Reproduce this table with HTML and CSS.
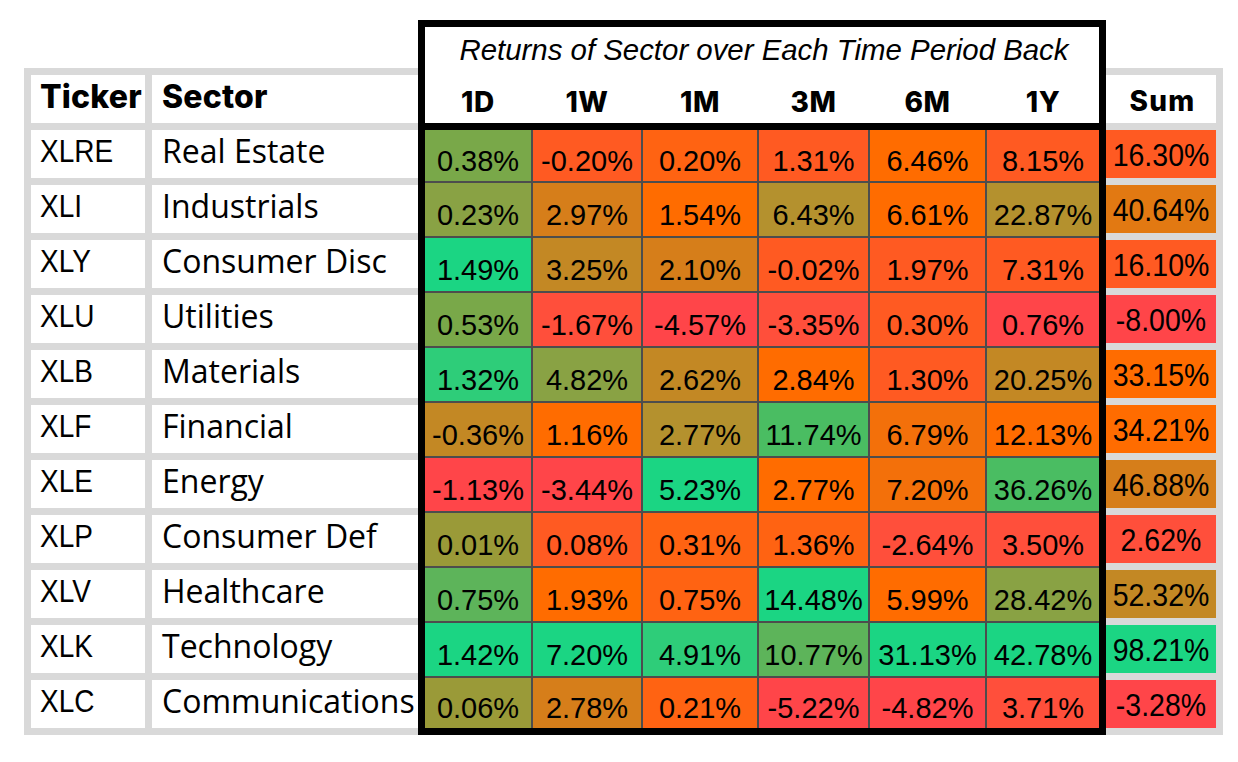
FILE: index.html
```html
<!DOCTYPE html>
<html>
<head>
<meta charset="utf-8">
<link rel="stylesheet" href="styles.css">
</head>
<body>
<div class="wrap">
  <div class="side">
    <div class="hcell">Ticker</div><div class="hcell">Sector</div>
    <div class="tk"><span>XLRE</span></div><div class="sec">Real Estate</div>
    <div class="tk"><span>XLI</span></div><div class="sec">Industrials</div>
    <div class="tk"><span>XLY</span></div><div class="sec">Consumer Disc</div>
    <div class="tk"><span>XLU</span></div><div class="sec">Utilities</div>
    <div class="tk"><span>XLB</span></div><div class="sec">Materials</div>
    <div class="tk"><span>XLF</span></div><div class="sec">Financial</div>
    <div class="tk"><span>XLE</span></div><div class="sec">Energy</div>
    <div class="tk"><span>XLP</span></div><div class="sec">Consumer Def</div>
    <div class="tk"><span>XLV</span></div><div class="sec">Healthcare</div>
    <div class="tk"><span>XLK</span></div><div class="sec">Technology</div>
    <div class="tk"><span>XLC</span></div><div class="sec">Communications</div>
  </div>

  <div class="box">
    <div class="head">
      <div class="title">Returns of Sector over Each Time Period Back</div>
      <div class="cols">
        <div>1D</div><div>1W</div><div>1M</div><div>3M</div><div>6M</div><div>1Y</div>
      </div>
    </div>
    <div class="grid">
      <div class="v3">0.38%</div><div class="r3">-0.20%</div><div class="o1">0.20%</div><div class="r3">1.31%</div><div class="o2">6.46%</div><div class="r3">8.15%</div>
      <div class="v2">0.23%</div><div class="b1">2.97%</div><div class="o2">1.54%</div><div class="b3">6.43%</div><div class="o2">6.61%</div><div class="b3">22.87%</div>
      <div class="g4">1.49%</div><div class="b2">3.25%</div><div class="b1">2.10%</div><div class="r3">-0.02%</div><div class="r3">1.97%</div><div class="r3">7.31%</div>
      <div class="v3">0.53%</div><div class="r2">-1.67%</div><div class="r1">-4.57%</div><div class="r2">-3.35%</div><div class="r3">0.30%</div><div class="r1">0.76%</div>
      <div class="g3">1.32%</div><div class="v2">4.82%</div><div class="b2">2.62%</div><div class="o2">2.84%</div><div class="r3">1.30%</div><div class="b2">20.25%</div>
      <div class="b2">-0.36%</div><div class="o2">1.16%</div><div class="b3">2.77%</div><div class="g2">11.74%</div><div class="o3">6.79%</div><div class="o2">12.13%</div>
      <div class="r1">-1.13%</div><div class="r1">-3.44%</div><div class="g4">5.23%</div><div class="o2">2.77%</div><div class="o3">7.20%</div><div class="g2">36.26%</div>
      <div class="v1">0.01%</div><div class="r3">0.08%</div><div class="o1">0.31%</div><div class="o1">1.36%</div><div class="r2">-2.64%</div><div class="r2">3.50%</div>
      <div class="g1">0.75%</div><div class="o2">1.93%</div><div class="o1">0.75%</div><div class="g4">14.48%</div><div class="o2">5.99%</div><div class="v2">28.42%</div>
      <div class="g4">1.42%</div><div class="g4">7.20%</div><div class="g3">4.91%</div><div class="g1">10.77%</div><div class="g4">31.13%</div><div class="g4">42.78%</div>
      <div class="v1">0.06%</div><div class="b1">2.78%</div><div class="o1">0.21%</div><div class="r1">-5.22%</div><div class="r1">-4.82%</div><div class="r2">3.71%</div>
    </div>
  </div>

  <div class="sum">
    <div class="shead">Sum</div>
    <div class="sv r3"><span>16.30%</span></div>
    <div class="sv b0"><span>40.64%</span></div>
    <div class="sv r3"><span>16.10%</span></div>
    <div class="sv r1"><span>-8.00%</span></div>
    <div class="sv o2"><span>33.15%</span></div>
    <div class="sv o2"><span>34.21%</span></div>
    <div class="sv b1"><span>46.88%</span></div>
    <div class="sv r2"><span>2.62%</span></div>
    <div class="sv b2"><span>52.32%</span></div>
    <div class="sv g4"><span>98.21%</span></div>
    <div class="sv r1"><span>-3.28%</span></div>
  </div>
</div>
</body>
</html>
```

FILE: styles.css
```css
html, body {
  margin: 0;
  background: #ffffff;
}

.wrap {
  display: flex;
  align-items: flex-end;
  padding: 20px 0 0 24px;
}

/* left ticker / sector table */
.side {
  display: grid;
  grid-template-columns: 114px 266px;
  grid-auto-rows: 48px;
  gap: 7px;
  padding: 7px 0 7px 7px;
  background: #d9d9d9;
}

.side > div {
  background: #ffffff;
  color: #000;
  overflow: visible;
  white-space: nowrap;
}

.hcell {
  font-family: "Inter", "Liberation Sans", sans-serif;
  font-weight: 800;
  font-size: 32px;
  letter-spacing: 0.2px;
  line-height: 41px;
  padding: 1px 0 0 9px;
}

.hcell + .hcell {
  padding-left: 10px;
}

.tk {
  font-family: "Liberation Sans", Arial, sans-serif;
  font-size: 28px;
  padding: 7px 0 0 9px;
}

.tk span {
  display: inline-block;
  line-height: 32px;
  transform: scaleY(1.14);
  transform-origin: 0 25.6px;
}

.sec {
  font-family: "Open Sans", "Liberation Sans", sans-serif;
  font-size: 32px;
  line-height: 41px;
  padding-left: 10px;
}

/* black framed returns block */
.box {
  border: 7px solid #000;
  width: 674px;
  background: #fff;
}

.head {
  border-bottom: 7px solid #000;
  box-sizing: border-box;
  height: 103px;
  padding-top: 6px;
}

.title {
  font-family: "Liberation Sans", Arial, sans-serif;
  font-style: italic;
  font-size: 29.4px;
  line-height: 34px;
  text-align: center;
  margin-bottom: 18px;
  padding-left: 4px;
}

.cols,
.grid {
  display: grid;
  grid-template-columns: 106px 108px 114px 109px 115px 112px;
  column-gap: 2px;
}

.cols > div {
  font-family: "Inter", "Liberation Sans", sans-serif;
  font-weight: 800;
  font-size: 28px;
  letter-spacing: 0.6px;
  line-height: 34px;
  text-align: center;
}

.grid {
  grid-template-rows: 51px repeat(9, 53px) 50px;
  row-gap: 2px;
  background: #4d4d4d;
}

.grid > div {
  font-family: "Liberation Sans", Arial, sans-serif;
  font-size: 29px;
  line-height: 32px;
  padding-top: 10px;
  box-sizing: border-box;
  display: flex;
  align-items: center;
  justify-content: center;
  white-space: nowrap;
  color: #000;
}

/* right sum column */
.sum {
  display: grid;
  grid-template-columns: 110px;
  grid-auto-rows: 48px;
  gap: 7px;
  padding: 7px 7px 7px 0;
  background: #d9d9d9;
}

.shead {
  background: #fff;
  font-family: "Inter", "Liberation Sans", sans-serif;
  font-weight: 800;
  font-size: 28px;
  letter-spacing: 1.2px;
  line-height: 34px;
  padding-top: 9px;
  padding-left: 3px;
  text-align: center;
  box-sizing: border-box;
}

.sv {
  font-family: "Liberation Sans", Arial, sans-serif;
  font-size: 28.5px;
  text-align: center;
  padding-top: 10px;
  box-sizing: border-box;
  white-space: nowrap;
  color: #000;
}

.sv span {
  display: inline-block;
  line-height: 32px;
  transform: scaleY(1.1);
  transform-origin: 50% 25.6px;
}

/* colour scale */
.r1 { background: #ff4549; }
.r2 { background: #ff4f3b; }
.r3 { background: #ff5a22; }
.o1 { background: #ff6312; }
.o2 { background: #ff6c00; }
.o3 { background: #f3700a; }
.b0 { background: #e27912; }
.b1 { background: #d67e1a; }
.b2 { background: #c38824; }
.b3 { background: #b4912e; }
.v1 { background: #9a9a38; }
.v2 { background: #89a244; }
.v3 { background: #79a849; }
.g1 { background: #5db45a; }
.g2 { background: #4abd62; }
.g3 { background: #2ecd79; }
.g4 { background: #1bd583; }
```
